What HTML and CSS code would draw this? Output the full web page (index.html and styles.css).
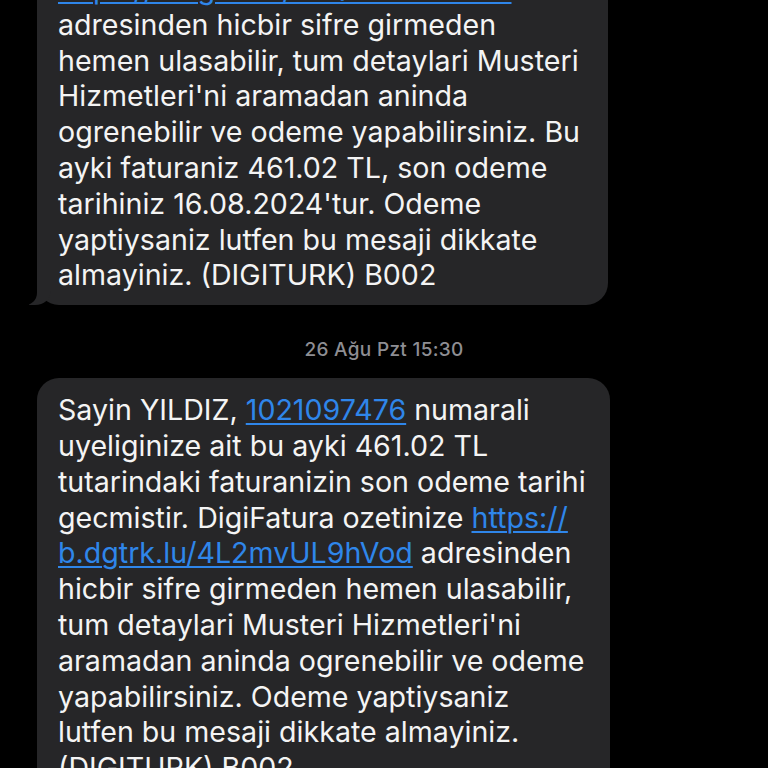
FILE: index.html
```html
<!DOCTYPE html>
<html lang="tr">
<head>
<meta charset="utf-8">
<title>Mesajlar</title>
<link rel="stylesheet" href="styles.css">
</head>
<body>
<div class="thread">
  <div class="bubble tail">
    <a class="link">https://b.dgtrk.lu/7kQ2mHxT9bLd</a><br>
    adresinden hicbir sifre girmeden<br>
    hemen ulasabilir, tum detaylari Musteri<br>
    Hizmetleri'ni aramadan aninda<br>
    ogrenebilir ve odeme yapabilirsiniz. Bu<br>
    ayki faturaniz 461.02 TL, son odeme<br>
    tarihiniz 16.08.2024'tur. Odeme<br>
    yaptiysaniz lutfen bu mesaji dikkate<br>
    almayiniz. (DIGITURK) B002
  </div>
  <div class="stamp">26 Ağu Pzt 15:30</div>
  <div class="bubble b2">
    Sayin YILDIZ, <a class="link">1021097476</a> numarali<br>
    uyeliginize ait bu ayki 461.02 TL<br>
    tutarindaki faturanizin son odeme tarihi<br>
    gecmistir. DigiFatura ozetinize <a class="link">https://</a><br>
    <a class="link">b.dgtrk.lu/4L2mvUL9hVod</a> adresinden<br>
    hicbir sifre girmeden hemen ulasabilir,<br>
    tum detaylari Musteri Hizmetleri'ni<br>
    aramadan aninda ogrenebilir ve odeme<br>
    yapabilirsiniz. Odeme yaptiysaniz<br>
    lutfen bu mesaji dikkate almayiniz.<br>
    (DIGITURK) B002
  </div>
</div>
</body>
</html>
```
FILE: styles.css
```css
html, body {
  margin: 0;
  padding: 0;
  background: #000;
  height: 100%;
  overflow: hidden;
}
.thread {
  margin-top: -43px;
  padding-left: 37px;
  font-family: Inter, "Noto Sans", sans-serif;
}
.bubble {
  position: relative;
  box-sizing: border-box;
  width: 571px;
  background: #262628;
  color: #f4f4f4;
  border-radius: 22px;
  padding: 14px 10px 12px 21px;
  font-size: 28.6px;
  line-height: 35.8px;
  letter-spacing: 0;
  white-space: nowrap;
}
.b2 {
  width: 573px;
}
.link {
  color: #2f86ea;
  text-decoration: underline;
  text-decoration-thickness: 2px;
  text-underline-offset: 3px;
}
.tail::before {
  content: "";
  position: absolute;
  bottom: 0;
  left: -8px;
  width: 22px;
  height: 22px;
  background: #262628;
  border-bottom-right-radius: 16px 14px;
}
.tail::after {
  content: "";
  position: absolute;
  bottom: 0;
  left: -26px;
  width: 26px;
  height: 22px;
  background: #000;
  border-bottom-right-radius: 12px;
}
.stamp {
  margin: 35px 0 18px -37px;
  text-align: center;
  font-family: Inter, "Noto Sans", sans-serif;
  font-size: 19px;
  line-height: 20px;
  font-weight: 500;
  letter-spacing: 0.3px;
  color: #8e8e93;
}
```
